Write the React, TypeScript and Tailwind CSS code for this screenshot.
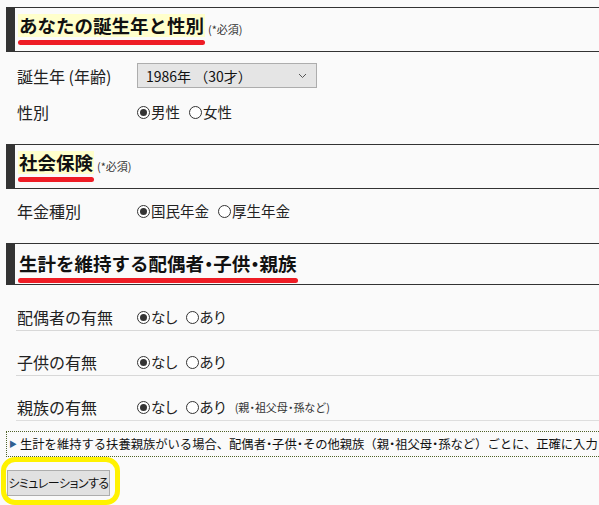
import React from "react";

const font = "font-['Meiryo','Noto_Sans_CJK_JP','Noto_Sans',sans-serif]";

// Meiryo draws the middle dot narrow; "palt" gives the same on the dot only
const NarrowDots: React.FC<{ text: string }> = ({ text }) => {
  const parts = text.split("・");
  return (
    <>
      {parts.map((p, i) => (
        <React.Fragment key={i}>
          {i > 0 && <span className="[font-feature-settings:'palt']">・</span>}
          {p}
        </React.Fragment>
      ))}
    </>
  );
};

type HeaderProps = {
  title: string;
  highlight?: boolean;
  required?: boolean;
  tall?: boolean;
};

const SectionHeader: React.FC<HeaderProps> = ({ title, highlight, required, tall = true }) => (
  <div
    className={`ml-[6px] flex items-start border-y border-[#333] border-l-[9px] border-l-[#333] pl-[3px] ${
      tall ? "h-[45px] pt-[6px]" : "h-[42px] pt-[8px]"
    }`}
  >
    <div className="flex flex-col">
      <span
        className={`px-[1px] text-[18.5px] font-bold leading-[23px] text-[#111] ${
          highlight ? "bg-[#ffffcc]" : ""
        }`}
      >
        <NarrowDots text={title} />
      </span>
      <span className="mt-[3px] h-[5px] rounded-full bg-[#ee1c25]" />
    </div>
    {required && (
      <span className="ml-[3px] mt-[8px] text-[11px] leading-[14px] text-[#333]">(*必須)</span>
    )}
  </div>
);

const Radio: React.FC<{ checked?: boolean; label: string }> = ({ checked, label }) => (
  <label className="flex items-center">
    <span className="flex h-[13px] w-[13px] items-center justify-center rounded-full border border-[#333] bg-white">
      {checked && <span className="h-[7px] w-[7px] rounded-full bg-[#333]" />}
    </span>
    <span className="ml-[1px] text-[14.5px] leading-[18px] text-[#222] [font-feature-settings:'palt']">
      {label}
    </span>
  </label>
);

const Row: React.FC<{ label: string; children: React.ReactNode; className?: string }> = ({
  label,
  children,
  className = "",
}) => (
  <div className={`flex h-[24px] items-center pl-[17px] ${className}`}>
    <div className="w-[120px] text-[16px] leading-[20px] text-[#222]">{label}</div>
    <div className="flex items-center gap-[9px]">{children}</div>
  </div>
);

const FamilyRow: React.FC<{ label: string; note?: string; last?: boolean }> = ({ label, note, last }) => (
  <div
    className={`ml-[16px] flex h-[25px] items-start border-b ${
      last ? "border-[#dedede]" : "border-[#d8d8d8]"
    }`}
  >
    <div className="w-[121px] pl-[1px] text-[16px] leading-[22px] text-[#222]">{label}</div>
    <div className="flex items-center gap-[8px] pt-[2px]">
      <Radio checked label="なし" />
      <Radio label="あり" />
      {note && (
        <span className="ml-[1px] text-[11px] leading-[18px] text-[#333]">
          <NarrowDots text={note} />
        </span>
      )}
    </div>
  </div>
);

export default function App() {
  return (
    <div className={`min-h-screen overflow-hidden bg-[#fafafa] pt-[7px] ${font}`}>
      <SectionHeader title="あなたの誕生年と性別" highlight required />

      <Row label="誕生年 (年齢)" className="mt-[11px] h-[25px]">
        <div className="flex h-[25px] w-[180px] items-center justify-between border border-[#adadad] bg-[#e5e5e5] pl-[8px] pr-[9px]">
          <span className="text-[14px] leading-[18px] text-[#111]">1986年 （30才）</span>
          <svg width="9" height="6" viewBox="0 0 9 6" className="text-[#555]">
            <path d="M1 1l3.5 3.5L8 1" fill="none" stroke="currentColor" strokeWidth="1" />
          </svg>
        </div>
      </Row>

      <Row label="性別" className="mt-[12px]">
        <Radio checked label="男性" />
        <Radio label="女性" />
      </Row>

      <div className="mt-[20px]">
        <SectionHeader title="社会保険" highlight required />
      </div>

      <Row label="年金種別" className="mt-[10px]">
        <Radio checked label="国民年金" />
        <Radio label="厚生年金" />
      </Row>

      <div className="mt-[20px]">
        <SectionHeader title="生計を維持する配偶者・子供・親族" tall={false} />
      </div>

      <div className="mt-[21px] flex flex-col gap-[20px]">
        <FamilyRow label="配偶者の有無" />
        <FamilyRow label="子供の有無" />
        <FamilyRow label="親族の有無" note="(親・祖父母・孫など)" last />
      </div>

      <div className="ml-[6px] mt-[10px] flex h-[26px] items-center overflow-hidden whitespace-nowrap border border-r-0 border-dotted border-[#4f6228] pl-[2px]">
        <span className="mr-[3px] text-[8px] leading-none text-[#2f5f8f]">▶</span>
        <span className="text-[12.3px] leading-[18px] text-[#111]">
          <NarrowDots text="生計を維持する扶養親族がいる場合、配偶者・子供・その他親族（親・祖父母・孫など）ごとに、正確に入力" />
        </span>
      </div>

      <div className="ml-[1px] inline-block rounded-[14px] border-[5px] border-[#fff200] pb-[4px] pl-[1px] pr-[5px] pt-[7px]">
        <button className="h-[26px] w-[103px] whitespace-nowrap border border-[#adadad] bg-[#e1e1e1] px-0 text-[12px] leading-[18px] tracking-[-0.5px] text-[#111] [font-feature-settings:'palt']">
          シミュレーションする
        </button>
      </div>
    </div>
  );
}
